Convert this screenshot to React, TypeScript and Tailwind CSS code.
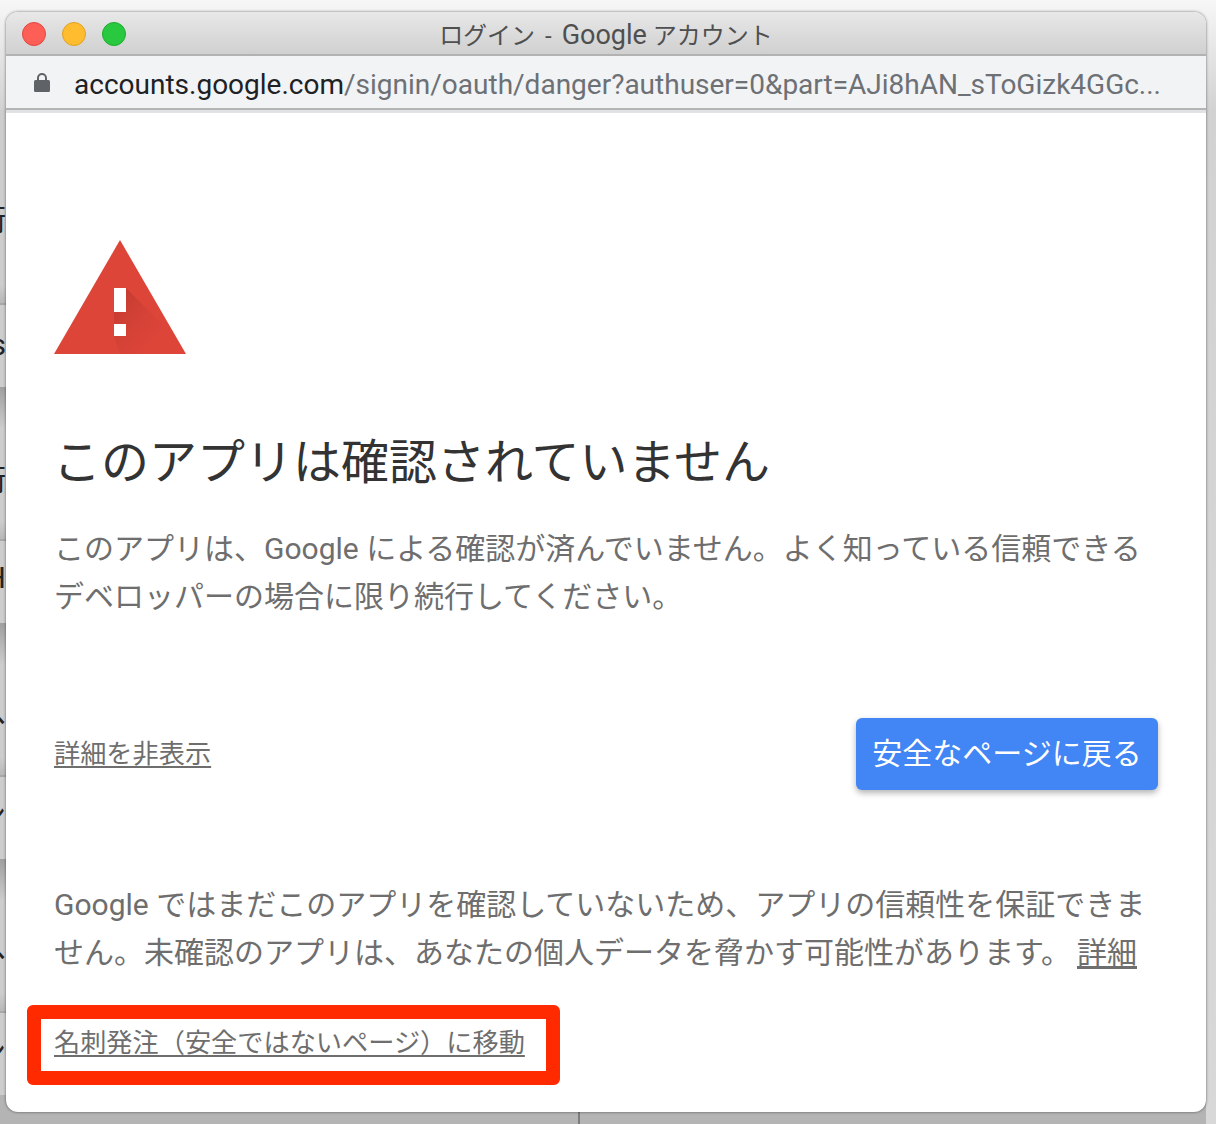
import React from 'react';

const FONT = 'font-["Roboto","Noto_Sans_CJK_JP",sans-serif]';

const Sliver: React.FC<{ top: string; children: React.ReactNode }> = ({ top, children }) => (
    <div className={`absolute left-0 w-[6px] overflow-hidden text-[30px] leading-[40px] text-[#222] flex justify-end ${top}`}>
        <span className="shrink-0">{children}</span>
    </div>
);

// one list row of the page behind the popup, 236px tall
const BackdropRow: React.FC<{ first?: boolean }> = ({ first }) => (
    <div className="h-[236px] shrink-0 flex flex-col bg-[#cdcdcd]">
        <div className={first ? 'h-[42px]' : 'h-[42px] bg-gradient-to-b from-[#a0a0a0] to-[#cdcdcd]'} />
        <div className="mt-[92px] h-[18px] bg-gradient-to-b from-[#cdcdcd] to-[#b8b8b8]" />
        <div className="h-[2px] bg-[#a8a8a8]" />
    </div>
);

// the page behind the popup, only its edges show around the window
const Backdrop = () => (
    <div className="absolute inset-0 bg-[#b4b4b4]">
        <div className="h-[110px] bg-gradient-to-b from-[#f7f7f7] to-[#d2d2d2]" />
        <div className="absolute top-[110px] left-0 w-[6px] h-[41px] bg-[#cdcdcd]" />
        <div className="absolute top-[110px] right-0 bottom-0 w-[10px] bg-gradient-to-b from-[#d2d2d2] to-[#d8d8d8]" />
        <div className="absolute top-[151px] left-0 w-[6px] h-[973px] overflow-hidden flex flex-col">
            <BackdropRow first />
            <BackdropRow />
            <BackdropRow />
            <BackdropRow />
        </div>
        <Sliver top="top-[200px]">術</Sliver>
        <Sliver top="top-[325px]">s</Sliver>
        <Sliver top="top-[460px]">術</Sliver>
        <Sliver top="top-[558px]">H</Sliver>
        <Sliver top="top-[695px]">ヘ</Sliver>
        <Sliver top="top-[795px]">ン</Sliver>
        <Sliver top="top-[930px]">ヘ</Sliver>
        <Sliver top="top-[1032px]">ン</Sliver>
        <div className="absolute left-[578px] top-[1112px] w-[2px] h-[12px] bg-[#7d7d7d]" />
    </div>
);

const WarningIcon = () => (
    <svg width="132" height="114" viewBox="0 0 132 114" className="block">
        <defs>
            <linearGradient id="warnShade" x1="0" y1="0" x2="1" y2="1">
                <stop offset="0" stopColor="#b5352b" stopOpacity="0.8" />
                <stop offset="1" stopColor="#dd4539" stopOpacity="0" />
            </linearGradient>
        </defs>
        <path d="M66 0 L132 114 L0 114 Z" fill="#dd4539" />
        <path d="M72 48 L110 86 L84 114 L66 114 L60 96 L72 96 L72 84 L60 84 L60 72 Z" fill="url(#warnShade)" />
        <rect x="60" y="48" width="12" height="24" fill="#fff" />
        <rect x="60" y="84" width="12" height="12" fill="#fff" />
    </svg>
);

const LockIcon = () => (
    <svg width="16" height="19" viewBox="0 0 16 19" className="ml-[28px] shrink-0">
        <path d="M4 8V5a4 4 0 0 1 8 0v3" fill="none" stroke="#5f6368" strokeWidth="2" />
        <rect x="0" y="7" width="16" height="12" rx="1.5" fill="#5f6368" />
    </svg>
);

const TitleBar = () => (
    <div className="relative h-[44px] flex items-center justify-center bg-gradient-to-b from-[#e8e8e8] to-[#d0d0d0] border-b-2 border-[#b2b2b2]">
        <div className="absolute left-[16px] top-[10px] flex gap-[16px]">
            <div className="w-[24px] h-[24px] rounded-full bg-[#fd5f57] border border-[#e2463f]" />
            <div className="w-[24px] h-[24px] rounded-full bg-[#febc2e] border border-[#dea123]" />
            <div className="w-[24px] h-[24px] rounded-full bg-[#28c83f] border border-[#1eab2d]" />
        </div>
        <span className="pt-[4px] text-[24px] leading-none text-[#4f4f4f] whitespace-pre">
            ログイン <span className="mx-[4px]">-</span> <span className="text-[27px]">Google</span> アカウント
        </span>
    </div>
);

const AddressBar = () => (
    <div className="h-[54px] flex items-center bg-[#f1f3f5] border-b-2 border-[#b4b4b4]">
        <LockIcon />
        <div className="ml-[24px] pt-[6px] text-[28px] leading-none whitespace-nowrap text-[#6d7074]">
            <span className="text-[#202124]">accounts.google.com</span>/signin/oauth/danger?authuser=0&amp;part=AJi8hAN_sToGizk4GGc...
        </div>
    </div>
);

export default function App() {
    return (
        <div className={`relative w-[1216px] h-[1124px] overflow-hidden ${FONT}`}>
            <Backdrop />
            <div className="relative ml-[6px] mt-[12px] w-[1200px] h-[1100px] rounded-[12px] overflow-hidden bg-white shadow-[0_0_3px_rgba(0,0,0,0.55)]">
                <TitleBar />
                <AddressBar />
                <div className="h-[3px] bg-[#e1e2e6]" />
                <div className="pl-[48px] pr-[48px] pt-[127px] text-[#6e6e6e]">
                    <WarningIcon />
                    <h1 className="mt-[81px] -ml-[1px] text-[48px] leading-[56px] text-[#333] font-normal whitespace-nowrap">このアプリは確認されていません</h1>
                    <p className="mt-[34px] text-[30px] leading-[48px] whitespace-pre-line">
                        {'このアプリは、Google による確認が済んでいません。よく知っている信頼できる\nデベロッパーの場合に限り続行してください。'}
                    </p>
                    <div className="mt-[97px] flex items-start justify-between">
                        <a className="mt-[18px] text-[26.2px] leading-[36px] underline underline-offset-[3px]">詳細を非表示</a>
                        <button className="w-[302px] h-[72px] pb-[2px] rounded-[6px] bg-[#4285f4] text-white text-[30px] shadow-[0_3px_6px_rgba(0,0,0,0.3)]">
                            安全なページに戻る
                        </button>
                    </div>
                    <p className="mt-[91px] text-[30px] leading-[48px]">
                        Google ではまだこのアプリを確認していないため、アプリの信頼性を保証できません。未確認のアプリは、あなたの個人データを脅かす可能性があります。
                        <a className="ml-[6px] underline underline-offset-[3px]">詳細</a>
                    </p>
                    <div className="mt-[28px] -ml-[27px] w-[533px] h-[80px] pb-[4px] rounded-[6px] border-[14px] border-[#ff2a00] flex items-center pl-[13px]">
                        <a className="text-[26.2px] leading-[36px] underline underline-offset-[3px] whitespace-nowrap">名刺発注（安全ではないページ）に移動</a>
                    </div>
                </div>
            </div>
        </div>
    );
}
